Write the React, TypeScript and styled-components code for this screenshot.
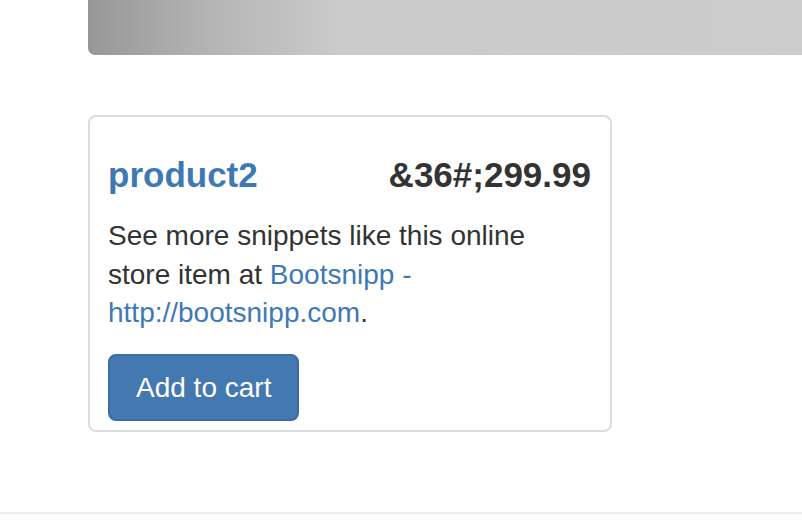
import React from "react";
import styled, { createGlobalStyle } from "styled-components";

const Global = createGlobalStyle`
  html, body { margin: 0; padding: 0; background: #fff; overflow: hidden; }
  body { font-family: "Liberation Sans", Arial, Helvetica, sans-serif; color: #333; }
`;

const Page = styled.div`
  display: flex;
  flex-direction: column;
  width: 802px;
  height: 522px;
`;

const Banner = styled.div`
  height: 55px;
  margin-left: 88px;
  border-bottom-left-radius: 7px;
  background: linear-gradient(to right, #979797 0px, #b4b4b4 120px, #cbcbcb 255px, #cccccc 100%);
`;

const Card = styled.div`
  box-sizing: border-box;
  margin: 60px 0 0 88px;
  width: 524px;
  height: 317px;
  border: 2px solid #dddddd;
  border-radius: 8px;
  padding: 39px 19px 9px 18px;
  display: flex;
  flex-direction: column;
`;

const TitleRow = styled.div`
  display: flex;
  justify-content: space-between;
  align-items: baseline;
  font-size: 35px;
  line-height: 38.5px;
  font-weight: 700;
`;

const Name = styled.a`
  color: #3e79b4;
  text-decoration: none;
`;

const Price = styled.span`
  color: #333;
`;

const Description = styled.p`
  margin: 22.5px 0 21.5px;
  font-size: 28px;
  line-height: 38.5px;
  color: #333;
`;

const Link = styled.a`
  color: #3e79b4;
  text-decoration: none;
`;

const CartButton = styled.button`
  align-self: flex-start;
  box-sizing: border-box;
  height: 67px;
  padding: 0 26px 0 26px;
  font-family: "Liberation Sans", Arial, Helvetica, sans-serif;
  font-size: 28px;
  line-height: 63px;
  color: #fff;
  background: #4378b1;
  border: 2px solid #3b6da2;
  border-radius: 8px;
  cursor: pointer;
`;

const Rule = styled.div`
  margin-top: 80px;
  height: 2px;
  background: #eeeeee;
`;

export default function App() {
  return (
    <>
      <Global />
      <Page>
        <Banner />
        <Card>
          <TitleRow>
            <Name href="#">product2</Name>
            <Price>&amp;36#;299.99</Price>
          </TitleRow>
          <Description>
            See more snippets like this online store item at{" "}
            <Link href="#">Bootsnipp - http://bootsnipp.com</Link>.
          </Description>
          <CartButton>Add to cart</CartButton>
        </Card>
        <Rule />
      </Page>
    </>
  );
}
